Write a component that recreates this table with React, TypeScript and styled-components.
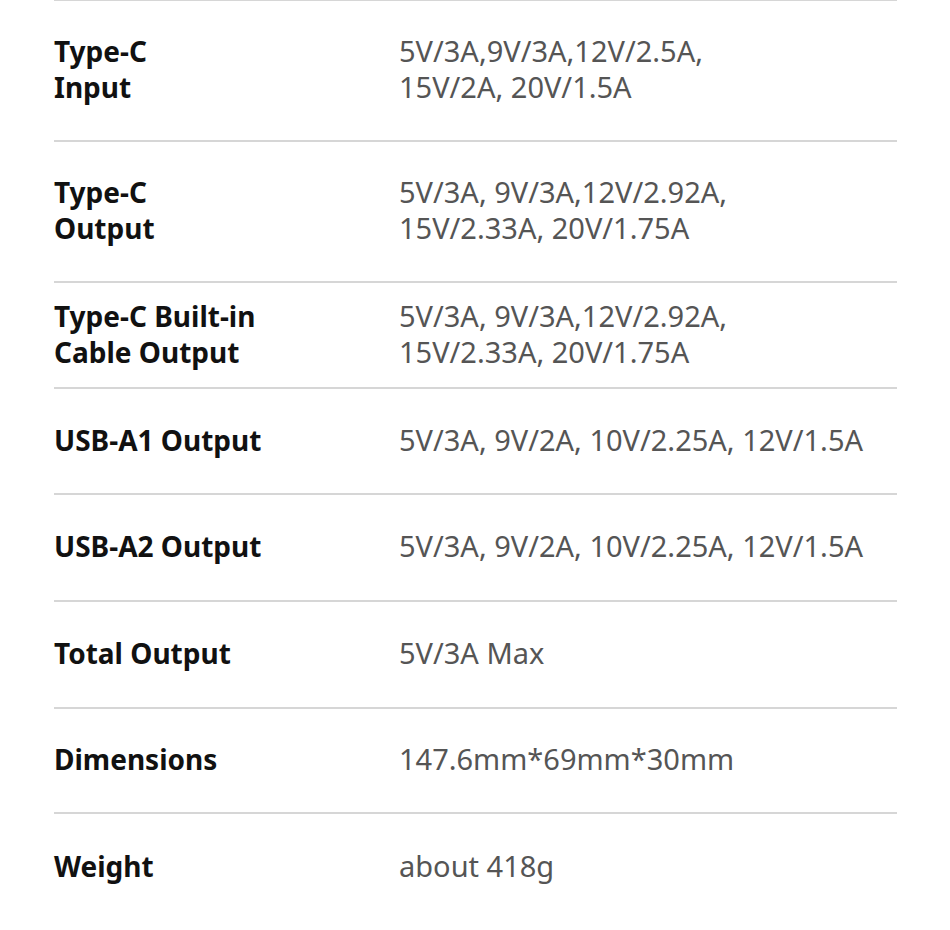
import React from 'react';
import styled, { createGlobalStyle } from 'styled-components';

interface Spec {
  label: string[];
  value: string[];
  height: number;
}

const specs: Spec[] = [
  { label: ['Type-C', 'Input'], value: ['5V/3A,9V/3A,12V/2.5A,', '15V/2A, 20V/1.5A'], height: 141 },
  { label: ['Type-C', 'Output'], value: ['5V/3A, 9V/3A,12V/2.92A,', '15V/2.33A, 20V/1.75A'], height: 141 },
  { label: ['Type-C Built-in', 'Cable Output'], value: ['5V/3A, 9V/3A,12V/2.92A,', '15V/2.33A, 20V/1.75A'], height: 106 },
  { label: ['USB-A1 Output'], value: ['5V/3A, 9V/2A, 10V/2.25A, 12V/1.5A'], height: 106 },
  { label: ['USB-A2 Output'], value: ['5V/3A, 9V/2A, 10V/2.25A, 12V/1.5A'], height: 107 },
  { label: ['Total Output'], value: ['5V/3A Max'], height: 107 },
  { label: ['Dimensions'], value: ['147.6mm*69mm*30mm'], height: 105 },
  { label: ['Weight'], value: ['about 418g'], height: 106 },
];

const App: React.FC = () => {
  return (
    <>
      <GlobalStyle />
      <SpecTable>
        {specs.map((spec, i) => (
          <SpecRow key={i} $height={spec.height} $last={i === specs.length - 1}>
            <SpecLabel>
              {spec.label.map((line) => (
                <div key={line}>{line}</div>
              ))}
            </SpecLabel>
            <SpecValue>
              {spec.value.map((line) => (
                <div key={line}>{line}</div>
              ))}
            </SpecValue>
          </SpecRow>
        ))}
      </SpecTable>
    </>
  );
};

export default App;

const GlobalStyle = createGlobalStyle`
  body {
    margin: 0;
    background: #fff;
    font-family: "Noto Sans", "Open Sans", sans-serif;
  }
`;

const SpecTable = styled.div`
  width: 843px;
  margin-left: 54px;
  border-top: 1px solid #d6d6d6;
`;

const SpecRow = styled.div<{ $height: number; $last: boolean }>`
  box-sizing: border-box;
  display: grid;
  grid-template-columns: 345px 1fr;
  align-items: center;
  height: ${(p) => p.$height}px;
  padding-bottom: 3px;
  border-bottom: ${(p) => (p.$last ? 'none' : '2px solid #d6d6d6')};
`;

const SpecLabel = styled.div`
  font-size: 28px;
  line-height: 36px;
  font-weight: 700;
  color: #111;
`;

const SpecValue = styled.div`
  font-size: 29px;
  line-height: 36px;
  font-weight: 400;
  color: #555;
`;
